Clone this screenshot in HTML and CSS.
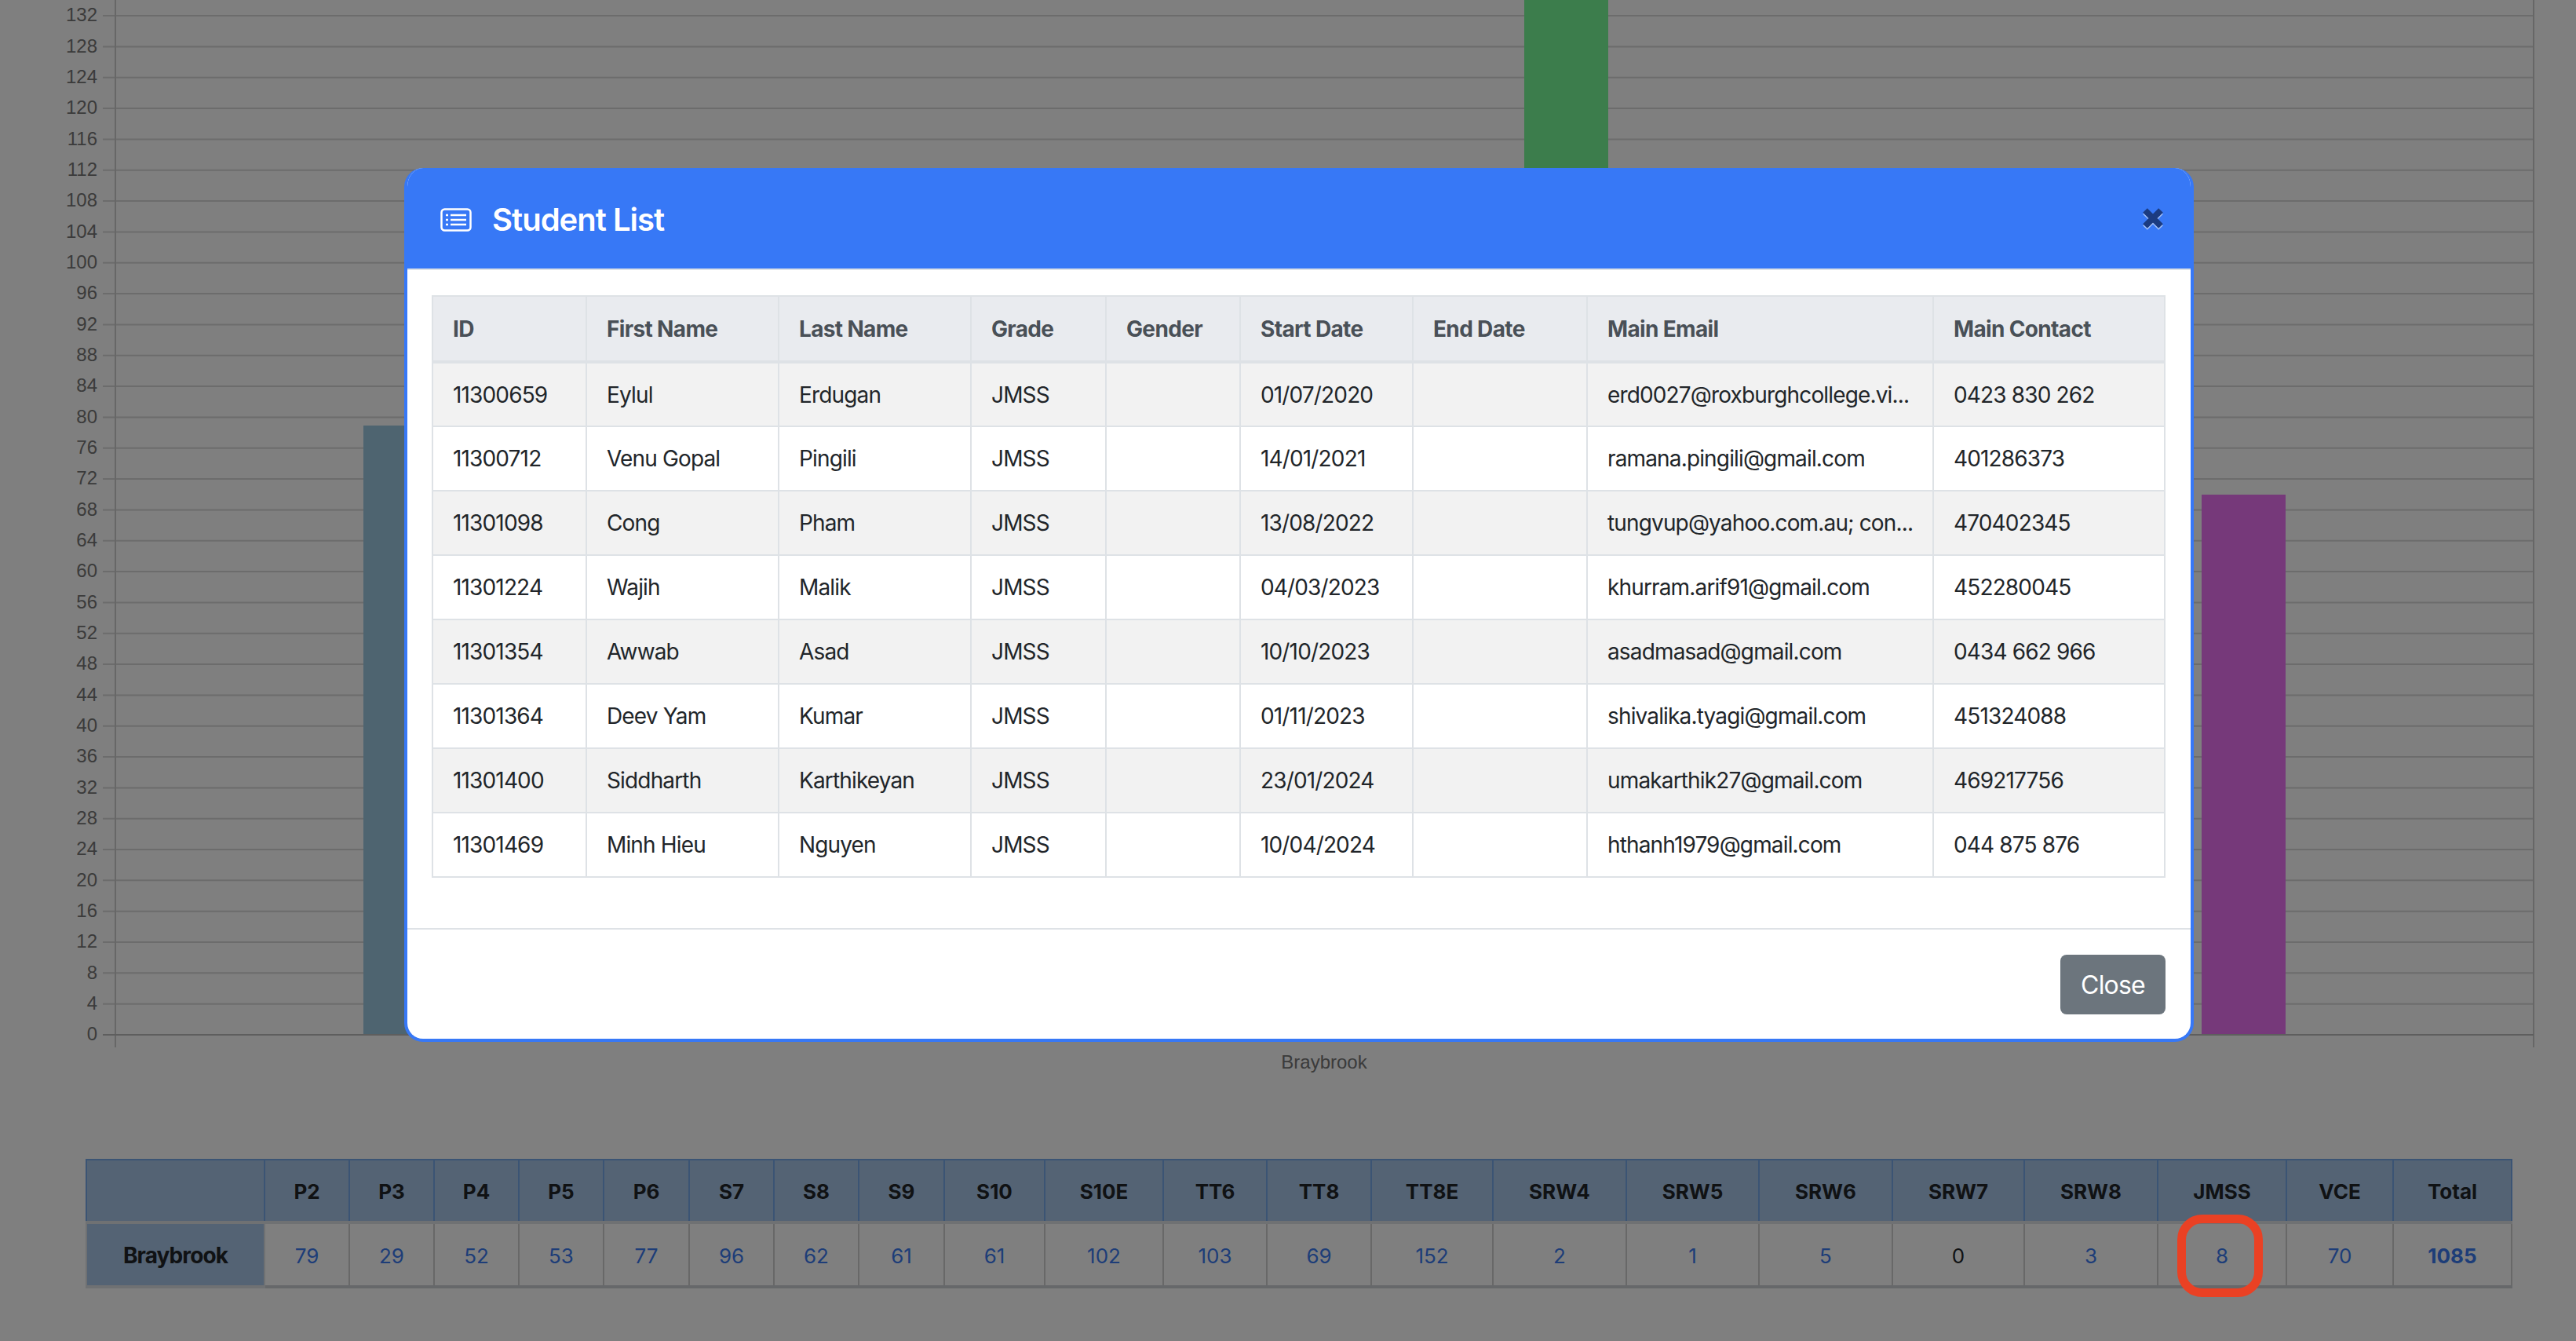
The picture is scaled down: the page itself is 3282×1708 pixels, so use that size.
FILE: index.html
```html
<!DOCTYPE html>
<html lang="en">

<head>
    <meta charset="UTF-8">
    <title>Student Enrolments</title>
    <link rel="stylesheet" href="styles.css">
</head>

<body>

    <div class="page">

        <!-- chart -->
        <svg class="chart" width="3282" height="1400" viewBox="0 0 3282 1400">
            <g class="grid">
                <line x1="131" x2="3228" y1="1278.7" y2="1278.7"/>
                <line x1="131" x2="3228" y1="1239.3" y2="1239.3"/>
                <line x1="131" x2="3228" y1="1200" y2="1200"/>
                <line x1="131" x2="3228" y1="1160.7" y2="1160.7"/>
                <line x1="131" x2="3228" y1="1121.3" y2="1121.3"/>
                <line x1="131" x2="3228" y1="1082" y2="1082"/>
                <line x1="131" x2="3228" y1="1042.7" y2="1042.7"/>
                <line x1="131" x2="3228" y1="1003.4" y2="1003.4"/>
                <line x1="131" x2="3228" y1="964" y2="964"/>
                <line x1="131" x2="3228" y1="924.7" y2="924.7"/>
                <line x1="131" x2="3228" y1="885.4" y2="885.4"/>
                <line x1="131" x2="3228" y1="846" y2="846"/>
                <line x1="131" x2="3228" y1="806.7" y2="806.7"/>
                <line x1="131" x2="3228" y1="767.4" y2="767.4"/>
                <line x1="131" x2="3228" y1="728" y2="728"/>
                <line x1="131" x2="3228" y1="688.7" y2="688.7"/>
                <line x1="131" x2="3228" y1="649.4" y2="649.4"/>
                <line x1="131" x2="3228" y1="610.1" y2="610.1"/>
                <line x1="131" x2="3228" y1="570.7" y2="570.7"/>
                <line x1="131" x2="3228" y1="531.4" y2="531.4"/>
                <line x1="131" x2="3228" y1="492.1" y2="492.1"/>
                <line x1="131" x2="3228" y1="452.7" y2="452.7"/>
                <line x1="131" x2="3228" y1="413.4" y2="413.4"/>
                <line x1="131" x2="3228" y1="374.1" y2="374.1"/>
                <line x1="131" x2="3228" y1="334.8" y2="334.8"/>
                <line x1="131" x2="3228" y1="295.4" y2="295.4"/>
                <line x1="131" x2="3228" y1="256.1" y2="256.1"/>
                <line x1="131" x2="3228" y1="216.8" y2="216.8"/>
                <line x1="131" x2="3228" y1="177.4" y2="177.4"/>
                <line x1="131" x2="3228" y1="138.1" y2="138.1"/>
                <line x1="131" x2="3228" y1="98.8" y2="98.8"/>
                <line x1="131" x2="3228" y1="59.4" y2="59.4"/>
                <line x1="131" x2="3228" y1="20.1" y2="20.1"/>
            </g>
            <line class="axis" x1="147" x2="147" y1="0" y2="1334"/>
            <line class="axis" x1="3228" x2="3228" y1="0" y2="1334"/>
            <line class="axis-zero" x1="131" x2="3228" y1="1318" y2="1318"/>

            <rect class="bar-teal" x="463" y="542" width="107" height="775"/>
            <rect class="bar-green" x="1942" y="0" width="107" height="1317"/>
            <rect class="bar-purple" x="2805" y="630" width="107" height="687"/>

            <g class="ticks">
                <text x="124" y="1318">0</text>
                <text x="124" y="1278.7">4</text>
                <text x="124" y="1239.3">8</text>
                <text x="124" y="1200">12</text>
                <text x="124" y="1160.7">16</text>
                <text x="124" y="1121.3">20</text>
                <text x="124" y="1082">24</text>
                <text x="124" y="1042.7">28</text>
                <text x="124" y="1003.4">32</text>
                <text x="124" y="964">36</text>
                <text x="124" y="924.7">40</text>
                <text x="124" y="885.4">44</text>
                <text x="124" y="846">48</text>
                <text x="124" y="806.7">52</text>
                <text x="124" y="767.4">56</text>
                <text x="124" y="728">60</text>
                <text x="124" y="688.7">64</text>
                <text x="124" y="649.4">68</text>
                <text x="124" y="610.1">72</text>
                <text x="124" y="570.7">76</text>
                <text x="124" y="531.4">80</text>
                <text x="124" y="492.1">84</text>
                <text x="124" y="452.7">88</text>
                <text x="124" y="413.4">92</text>
                <text x="124" y="374.1">96</text>
                <text x="124" y="334.8">100</text>
                <text x="124" y="295.4">104</text>
                <text x="124" y="256.1">108</text>
                <text x="124" y="216.8">112</text>
                <text x="124" y="177.4">116</text>
                <text x="124" y="138.1">120</text>
                <text x="124" y="98.8">124</text>
                <text x="124" y="59.4">128</text>
                <text x="124" y="20.1">132</text>
            </g>
            <text class="chart-label" x="1687" y="1355">Braybrook</text>
        </svg>

        <!-- totals per grade -->
        <table class="totals">
            <colgroup>
                <col class="c227">
                <col class="c108"><col class="c108"><col class="c108"><col class="c108"><col class="c109">
                <col class="c108"><col class="c108"><col class="c109">
                <col class="c128"><col class="c151"><col class="c132"><col class="c133"><col class="c155">
                <col class="c170"><col class="c169"><col class="c170"><col class="c168"><col class="c170">
                <col class="c164"><col class="c136"><col class="c151">
            </colgroup>
            <thead>
                <tr>
                    <th></th>
                    <th>P2</th><th>P3</th><th>P4</th><th>P5</th><th>P6</th>
                    <th>S7</th><th>S8</th><th>S9</th><th>S10</th><th>S10E</th>
                    <th>TT6</th><th>TT8</th><th>TT8E</th>
                    <th>SRW4</th><th>SRW5</th><th>SRW6</th><th>SRW7</th><th>SRW8</th>
                    <th>JMSS</th><th>VCE</th><th>Total</th>
                </tr>
            </thead>
            <tbody>
                <tr>
                    <th>Braybrook</th>
                    <td><a href="#">79</a></td>
                    <td><a href="#">29</a></td>
                    <td><a href="#">52</a></td>
                    <td><a href="#">53</a></td>
                    <td><a href="#">77</a></td>
                    <td><a href="#">96</a></td>
                    <td><a href="#">62</a></td>
                    <td><a href="#">61</a></td>
                    <td><a href="#">61</a></td>
                    <td><a href="#">102</a></td>
                    <td><a href="#">103</a></td>
                    <td><a href="#">69</a></td>
                    <td><a href="#">152</a></td>
                    <td><a href="#">2</a></td>
                    <td><a href="#">1</a></td>
                    <td><a href="#">5</a></td>
                    <td>0</td>
                    <td><a href="#">3</a></td>
                    <td><a href="#">8</a></td>
                    <td><a href="#">70</a></td>
                    <td><a class="grand" href="#">1085</a></td>
                </tr>
            </tbody>
        </table>

        <div class="backdrop"></div>

        <!-- student list popup -->
        <div class="modal">
            <div class="modal-header">
                <svg class="list-icon" width="40" height="30" viewBox="0 0 40 30">
                    <rect x="1.5" y="1.5" width="37" height="27" rx="4"/>
                    <path d="M13 9h20M13 15h20M13 21h20"/>
                    <path class="dots" d="M7 9h3M7 15h3M7 21h3"/>
                </svg>
                <h2>Student List</h2>
                <button class="close-x" aria-label="Close">
                    <svg width="26" height="26" viewBox="0 0 26 26">
                        <path d="M3 3l20 20M23 3L3 23"/>
                    </svg>
                </button>
            </div>
            <div class="modal-body">
                <table class="students">
                    <colgroup>
                        <col class="s196"><col class="s245"><col class="s245"><col class="s172"><col class="s171">
                        <col class="s220"><col class="s222"><col class="s441"><col class="s295">
                    </colgroup>
                    <thead>
                        <tr>
                            <th>ID</th>
                            <th>First Name</th>
                            <th>Last Name</th>
                            <th>Grade</th>
                            <th>Gender</th>
                            <th>Start Date</th>
                            <th>End Date</th>
                            <th>Main Email</th>
                            <th>Main Contact</th>
                        </tr>
                    </thead>
                    <tbody>
                        <tr>
                            <td>11300659</td><td>Eylul</td><td>Erdugan</td><td>JMSS</td><td></td>
                            <td>01/07/2020</td><td></td><td>erd0027@roxburghcollege.vi...</td><td>0423 830 262</td>
                        </tr>
                        <tr>
                            <td>11300712</td><td>Venu Gopal</td><td>Pingili</td><td>JMSS</td><td></td>
                            <td>14/01/2021</td><td></td><td>ramana.pingili@gmail.com</td><td>401286373</td>
                        </tr>
                        <tr>
                            <td>11301098</td><td>Cong</td><td>Pham</td><td>JMSS</td><td></td>
                            <td>13/08/2022</td><td></td><td>tungvup@yahoo.com.au; con...</td><td>470402345</td>
                        </tr>
                        <tr>
                            <td>11301224</td><td>Wajih</td><td>Malik</td><td>JMSS</td><td></td>
                            <td>04/03/2023</td><td></td><td>khurram.arif91@gmail.com</td><td>452280045</td>
                        </tr>
                        <tr>
                            <td>11301354</td><td>Awwab</td><td>Asad</td><td>JMSS</td><td></td>
                            <td>10/10/2023</td><td></td><td>asadmasad@gmail.com</td><td>0434 662 966</td>
                        </tr>
                        <tr>
                            <td>11301364</td><td>Deev Yam</td><td>Kumar</td><td>JMSS</td><td></td>
                            <td>01/11/2023</td><td></td><td>shivalika.tyagi@gmail.com</td><td>451324088</td>
                        </tr>
                        <tr>
                            <td>11301400</td><td>Siddharth</td><td>Karthikeyan</td><td>JMSS</td><td></td>
                            <td>23/01/2024</td><td></td><td>umakarthik27@gmail.com</td><td>469217756</td>
                        </tr>
                        <tr>
                            <td>11301469</td><td>Minh Hieu</td><td>Nguyen</td><td>JMSS</td><td></td>
                            <td>10/04/2024</td><td></td><td>hthanh1979@gmail.com</td><td>044 875 876</td>
                        </tr>
                    </tbody>
                </table>
            </div>
            <div class="modal-footer">
                <button class="btn-close">Close</button>
            </div>
        </div>

        <!-- hand drawn highlight round the JMSS count -->
        <div class="highlight"></div>

    </div>

</body>

</html>
```

FILE: styles.css
```css
* {
    box-sizing: border-box;
}

body {
    margin: 0;
    font-family: Inter, "Liberation Sans", sans-serif;
    background-color: #fff;
    color: #212529;
}

.page {
    position: relative;
    width: 3282px;
    height: 1708px;
    overflow: hidden;
}

/* chart */
.chart {
    display: block;
}

.grid line {
    stroke: #d8d8d8;
    stroke-width: 2;
}

.axis {
    stroke: #cfcfcf;
    stroke-width: 2;
}

.axis-zero {
    stroke: #bdbdbd;
    stroke-width: 2;
}

.bar-teal {
    fill: #9dc8e0;
}

.bar-green {
    fill: #78fa98;
}

.bar-purple {
    fill: #ec72f4;
}

.ticks text,
.chart-label {
    font-family: "Liberation Sans", Arial, sans-serif;
    font-size: 24px;
    fill: #767676;
    dominant-baseline: middle;
}

.ticks {
    transform: translateY(1px);
}

.ticks text {
    text-anchor: end;
}

.chart-label {
    text-anchor: middle;
}

/* totals table */
.totals {
    width: 3090px;
    margin: 76px 0 0 109px;
    border-collapse: collapse;
    table-layout: fixed;
    font-size: 26px;
    text-align: center;
}

.totals th {
    height: 80px;
    padding: 2px 0 0;
    font-weight: 700;
    background-color: #a9c6e8;
    border: 2px solid #77a8e8;
}

.totals thead th {
    border-bottom: 4px solid #dee2e6;
}

.totals tbody th {
    height: 82px;
    padding-top: 2px;
    font-size: 28px;
    letter-spacing: -0.9px;
    border-color: #dee2e6;
    border-bottom-width: 4px;
}

.totals td {
    height: 82px;
    padding: 2px 0 0;
    border: 2px solid #ccd0d4;
    border-bottom-width: 4px;
    border-right-color: #d0d0d0;
}

.totals a {
    color: #3b7af0;
    text-decoration: none;
}

.totals a.grand {
    font-weight: 700;
}

.c108 { width: 108px; }
.c109 { width: 109px; }
.c128 { width: 128px; }
.c132 { width: 132px; }
.c133 { width: 133px; }
.c136 { width: 136px; }
.c151 { width: 151px; }
.c155 { width: 155px; }
.c164 { width: 164px; }
.c168 { width: 168px; }
.c169 { width: 169px; }
.c170 { width: 170px; }
.c227 { width: 227px; }

.backdrop {
    position: absolute;
    inset: 0;
    background-color: rgba(0, 0, 0, 0.5);
}

/* modal */
.modal {
    position: absolute;
    left: 515px;
    top: 214px;
    width: 2280px;
    height: 1113px;
    display: flex;
    flex-direction: column;
    background-color: #fff;
    border-radius: 24px;
    border: 4px solid #3778f6;
    border-top: none;
    overflow: hidden;
}

.modal-header {
    display: flex;
    align-items: center;
    height: 130px;
    padding: 4px 35px 0 42px;
    background-color: #3778f6;
    border-bottom: 2px solid #dee2e6;
    color: #fff;
}

.modal-header h2 {
    margin: 0 0 0 26px;
    font-size: 40px;
    font-weight: 600;
    line-height: 48px;
    letter-spacing: -1px;
}

.list-icon {
    fill: none;
    stroke: #fff;
    stroke-width: 2.5;
}

.close-x {
    display: flex;
    margin-left: auto;
    margin-bottom: 4px;
    padding: 0;
    border: none;
    background: none;
    filter: drop-shadow(0 2px 0 #a4c2fa);
}

.close-x path {
    fill: none;
    stroke: #1b3b80;
    stroke-width: 8;
}

.modal-body {
    flex: 1;
    padding: 32px 32px 0 31px;
}

.students {
    width: 2208px;
    border-collapse: collapse;
    table-layout: fixed;
    font-size: 28px;
    letter-spacing: -0.85px;
}

.students th,
.students td {
    height: 82px;
    padding: 0 0 0 25px;
    text-align: left;
    border: 2px solid #dee2e6;
    white-space: nowrap;
    overflow: hidden;
}

.students th {
    height: 84px;
    font-weight: 700;
    letter-spacing: -0.65px;
    color: #495057;
    background-color: #e9ebef;
    border-bottom-width: 4px;
}

.students tbody tr:nth-child(odd) td {
    background-color: #f2f2f2;
}

.s171 { width: 171px; }
.s172 { width: 172px; }
.s196 { width: 196px; }
.s220 { width: 220px; }
.s222 { width: 222px; }
.s245 { width: 245px; }
.s295 { width: 295px; }
.s441 { width: 441px; }

.modal-footer {
    display: flex;
    justify-content: flex-end;
    align-items: flex-start;
    height: 141px;
    padding: 32px 32px 0 0;
    border-top: 2px solid #dee2e6;
}

.btn-close {
    width: 134px;
    height: 76px;
    padding: 0;
    font-family: inherit;
    font-size: 32px;
    letter-spacing: -0.8px;
    color: #fff;
    background-color: #6c757d;
    border: none;
    border-radius: 8px;
}

.highlight {
    position: absolute;
    left: 2774px;
    top: 1547px;
    width: 109px;
    height: 105px;
    border: 11px solid #ea4124;
    border-radius: 32px;
}
```
